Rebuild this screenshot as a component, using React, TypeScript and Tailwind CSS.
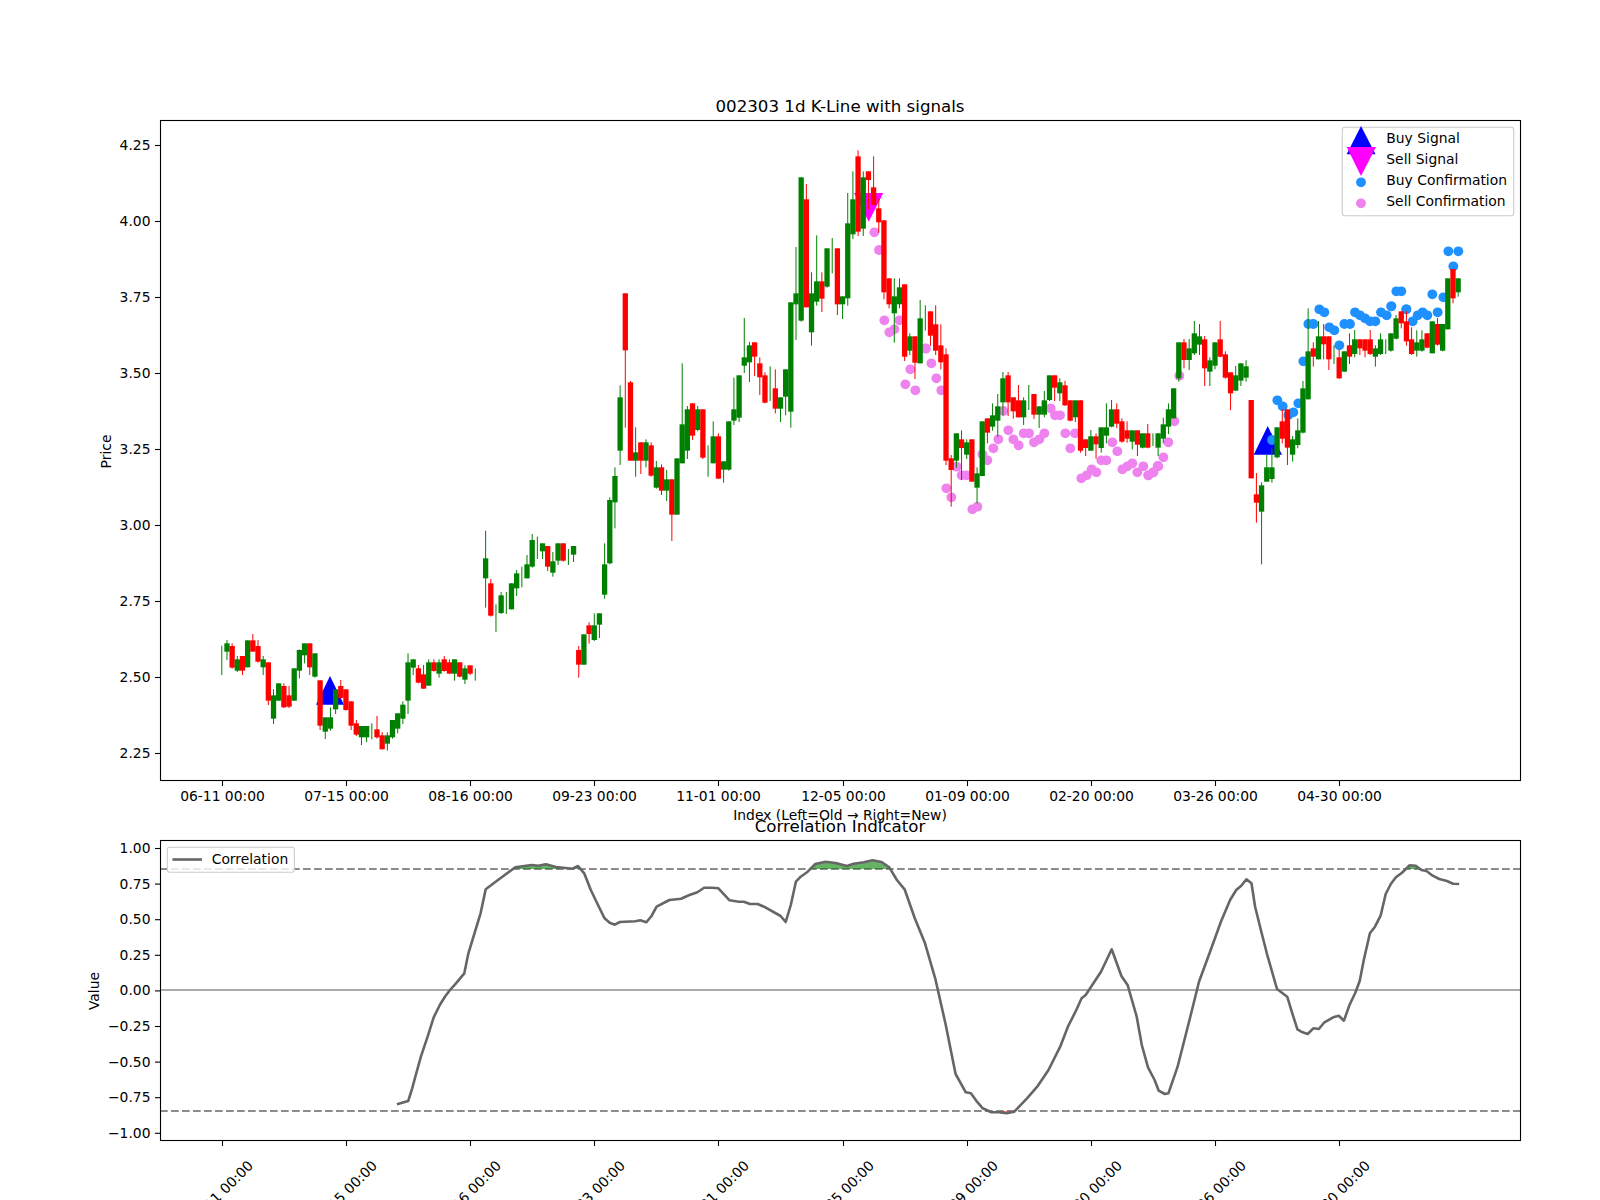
const S1 = "g437,0,0,525 g420,430,455,480 r430,438,503,506 g468,478,512,516 r468,468,512,525 g421,421,502,502 r402,421,455,455 r420,438,485,488 g468,478,502,525 r487,487,602,615 g568,586,656,672 g550,550,602,602 r550,558,622,624 r558,586,620,624 g505,505,602,602 g448,450,512,535 g430,430,466,490 r430,430,502,525 g460,460,530,533 r541,541,677,690 g652,652,695,717 g622,652,686,692 g568,568,628,642 r540,558,594,596 r568,568,630,632 r604,604,677,690 r660,670,704,708 g678,678,712,735 g678,678,712,726 g670,0,0,718 r648,688,712,716 r696,706,748,748 g697,706,731,752 g660,660,712,716 g640,640,686,700 g604,614,656,672 g460,487,602,642 g478,478,503,525 r495,505,548,550 r495,523,566,566 g478,487,557,557 r478,487,513,515 g478,487,521,533 r468,478,513,515 r478,487,521,521 g478,478,521,542 r487,487,530,532 g496,505,539,552 r496,496,521,525 g505,0,0,542 - g92,175,235,323 r237,250,347,350 g313,0,0,396 g276,286,339,342 g276,0,0,342 g250,250,328,328 g210,220,265,288 g200,0,0,262 g165,193,235,235";
const S2 = "g72,90,170,173 g80,0,0,147 g100,100,124,147 r108,108,170,183 g126,154,188,200 g100,100,152,165 r100,100,152,155 g117,0,0,165 g108,108,134,156 r408,420,464,503 g373,373,464,464 r337,346,372,401 g310,346,390,393 g310,310,344,384 g100,163,254,266";
const S3 = "g682,690,880,883 g592,618,697,775 g346,382,542,585 r70,70,241,473 r333,337,572,572 g472,547,572,620 r517,517,572,612 g508,517,572,592 r517,526,617,620 g573,592,653,656 r583,592,662,675 g600,628,662,693 r628,628,734,813 g565,565,734,734 g280,463,580,580 g408,418,542,567 r400,400,497,510 g408,418,480,484 r418,418,563,567 g526,0,0,620 g454,499,580,580 r490,499,626,626 g574,574,599,638 g454,454,599,602 g323,418,452,465 g316,316,443,456 g144,262,287,309 g216,226,277,336 r217,217,260,318 r262,280,322,375 r307,316,398,400 g289,0,0,393 r298,355,416,430 g382,382,416,456 g298,298,380,436";
const S4 = "g517,517,845,893 g351,490,523,630 g142,142,572,575 r162,208,532,532 g427,490,607,647 g316,454,515,527 r427,454,506,546 g355,355,470,473 g324,0,0,430 r355,355,523,555 g499,499,523,567 g189,280,505,527 g124,208,313,327 r61,79,305,318 g124,142,296,318 r124,124,150,238 r79,172,225,226 r207,235,277,308 r271,271,487,508 r445,445,523,535 g445,499,550,638 g445,472,523,535";
const S5 = "r-47,-47,170,183 g100,109,152,165 r109,109,188,237 g0,55,190,190 g16,0,0,92 r34,34,107,137 r16,73,152,165 r73,136,187,208 r145,163,482,495 r465,475,510,620 g400,400,482,503 r391,418,444,540 g418,427,464,477 r418,418,545,545 g502,520,563,610 g364,364,528,528 r355,355,398,430 g310,346,380,392 g282,319,362,410 g216,235,307,346 r216,226,307,348 r292,292,334,356 r255,301,352,352 g292,301,352,375 g255,0,0,330 r282,282,344,357 g319,319,344,384 g273,301,344,352 g226,226,300,303 r226,226,263,303 g235,247,280,303 r243,256,316,318 r301,301,362,364 g301,301,352,366 r301,301,452,458 r418,418,444,468 g390,409,452,452 r400,409,433,476 g382,382,444,458 g310,382,407,430 g300,328,380,382 r310,328,371,384 r355,364,425,428 r364,391,416,428 g391,391,425,448 r391,391,434,468 g400,400,443,445 r372,400,443,445 g400,0,0,438 g400,400,443,468";
const S6 = "g353,373,416,430 g310,328,380,402 g265,265,355,355 g127,127,235,245 r117,127,180,205 g117,145,180,210 g63,100,160,165 g72,109,134,165 r108,118,205,258 g172,181,215,258 g127,127,197,208 r63,118,170,172 r154,163,233,236 r217,217,280,330 g198,226,272,272 g190,190,242,258 g181,199,233,245 r300,300,535,535 r519,583,608,668 g547,556,635,793 g464,502,545,545 g445,502,537,548 g382,382,472,475 r328,364,416,430 r328,328,443,495 g408,418,464,485 g355,391,435,445 g243,265,398,400 g25,154,298,298 r127,145,170,200 g63,109,178,178 r72,109,133,178 r109,109,178,210 g136,0,0,192 r150,172,235,237 g154,154,215,215 r100,136,170,192 g90,118,162,172 r118,118,145,165 r118,118,152,172 r90,118,162,165 g136,145,170,200 g100,118,162,165 g118,0,0,162 g100,100,152,155 g45,55,116,118 r34,34,70,85 r34,64,124,137 r82,118,162,165 g91,127,152,170 g91,118,152,155 r100,100,143,145 g64,64,160,160 r54,72,134,137 g72,72,152,154 g-65,-65,88,88 r-93,-93,-5,10 g-65,-65,-23,-10";

type Candle = { i: number; c: string; wt: number; bt: number; bb: number; wb: number; doji: boolean };

function parseCandles(): Candle[] {
  const out: Candle[] = [];
  let i = 0;
  const segs: [string, number][] = [[S1, 500], [S2, 510], [S3, 270], [S4, 130], [S5, 300], [S6, 300]];
  for (const [s, oy] of segs) {
    for (const tok of s.split(" ")) {
      if (tok !== "-") {
        const c = tok[0] === "g" ? "#008000" : "#ff0000";
        const [a, b, d, e] = tok.slice(1).split(",").map(Number);
        out.push({ i, c, wt: oy + a / 3, bt: oy + b / 3, bb: oy + d / 3, wb: oy + e / 3, doji: b === 0 && d === 0 });
      }
      i++;
    }
  }
  return out;
}
const candles = parseCandles();
const bx = (i: number) => 221.8 + 5.173 * i;

function pts(s: string, ox: number, oy: number, sx: number): number[][] {
  return s.split(" ").map((p) => {
    const [a, b] = p.split(",").map(Number);
    return [ox + a / sx, oy + b / 3];
  });
}

const violet = [
  ...pts("523,307 537,360", 700, 130, 3),
  ...pts("677,656", 700, 130, 3),
  ...pts("73,61 88,97 103,88 118,61 197,145 151,208 136,253 166,271 214,190 229,235 244,271 259,565 274,592 290,500 305,526 320,526 367,463 382,481 337,628 352,620 400,445 415,418 430,333 445,391 460,418 476,436 491,400 507,400 522,427 538,418 553,400 572,325 585,346 600,346 616,400 645,400 631,445 664,535 680,526 695,508 709,517 724,481 739,481 757,427 772,454 787,508 802,499 817,490 832,517 850,499 865,526 880,517 893,498", 860, 300, 3),
  ...pts("25,526 40,517 55,499 70,472 85,427 103,364 118,227", 1140, 300, 3),
];
const blue = [
  ...pts("396,420 412,301 428,319 445,345 460,337 475,310 490,184 505,72 520,72 538,28 553,37 568,82 583,91 598,136 613,72 630,72 645,37 660,46 675,55 690,64 706,64 723,37 740,46 754,19 799,28 818,64 833,46 848,37 862,46 893,37", 1140, 300, 3),
  ...pts("235,49 265,49 250,94 79,169 94,169 187,178 220,187 64,214 109,223", 1370, 235, 3),
];

const line = [
  ...pts("778,1003 800,993 808,955 815,915 825,860 838,800 850,742 862,705 872,680 882,660 892,643 910,610 918,550 932,480 942,430 952,358 978,328 1010,292 1042,285 1055,287 1070,283 1090,291 1122,296 1133,288 1145,310 1158,360 1172,405 1185,445 1195,458 1205,464 1215,456 1245,454 1255,451 1267,457 1277,438 1287,410 1312,390 1335,386 1350,376 1367,367 1380,353 1395,353 1408,355 1430,391 1448,395 1458,395 1470,402 1485,402 1500,412 1530,438 1540,456 1550,405 1560,335", 0, 770, 1.96),
  ...pts("0,322 15,305 30,282 50,275 70,279 92,288 105,281 125,277 142,271 160,276 175,292 190,330 205,358 225,445 245,520 265,625 285,760 305,912 325,967 335,970 347,995 358,1015 375,1027 390,1027 405,1030 420,1025 445,985 465,950 487,900 510,830 525,770 540,725 552,685 560,675 575,640 590,605 611,538 630,618 642,645 660,740 670,825 682,892 695,930 703,962 715,972 722,970 740,890 765,740 782,635 805,540 825,455 843,390 855,360 865,347 875,328 885,340 892,410 905,490 915,550 935,657 955,680 965,730 975,778 985,787 995,792 1006,775 1017,777 1027,758 1045,742 1056,737 1066,752 1077,705 1088,670 1097,633 1105,570 1117,490 1127,470 1138,437 1148,372 1158,342 1168,322 1180,308 1195,286 1207,287 1218,300 1228,303 1240,317 1253,327 1268,333 1280,341 1292,342", 800, 770, 1.96),
];
const linePts = line.map((p) => p[0].toFixed(1) + "," + p[1].toFixed(1)).join(" ");

const xTicks = [222.5, 346.5, 470.5, 594.5, 718.5, 843.5, 967.5, 1091.5, 1215.5, 1339.5];
const xLabels = ["06-11 00:00", "07-15 00:00", "08-16 00:00", "09-23 00:00", "11-01 00:00", "12-05 00:00", "01-09 00:00", "02-20 00:00", "03-26 00:00", "04-30 00:00"];
const priceTicks = ["4.25", "4.00", "3.75", "3.50", "3.25", "3.00", "2.75", "2.50", "2.25"];
const valueTicks = ["1.00", "0.75", "0.50", "0.25", "0.00", "−0.25", "−0.50", "−0.75", "−1.00"];
const dash = "7.7 3.3";

export default function App() {
  return (
    <div className="w-[1600px] h-[1200px] bg-white">
      <svg width={1600} height={1200} viewBox="0 0 1600 1200" className="block font-['DejaVu_Sans',sans-serif] text-[13.89px]">
        <defs>
          <clipPath id="above"><rect x={160} y={840} width={1360} height={29} /></clipPath>
          <clipPath id="below"><rect x={160} y={1111} width={1360} height={29} /></clipPath>
        </defs>

        {/* price panel */}
        <text x={840} y={112} textAnchor="middle" fontSize={16.67}>002303 1d K-Line with signals</text>
        <polygon points="330,676 316,704.7 344,704.7" fill="#0000ff" />
        <polygon points="1267.7,426 1253.7,454.7 1282,454.7" fill="#0000ff" />
        <polygon points="854,193 883.3,193 868.7,221.7" fill="#ff00ff" />
        {violet.map((p, k) => <circle key={k} cx={p[0]} cy={p[1]} r={4.9} fill="#ee82ee" />)}
        {blue.map((p, k) => <circle key={k} cx={p[0]} cy={p[1]} r={4.9} fill="#1e90ff" />)}
        {candles.map((k) => (
          <g key={k.i} fill={k.c} stroke="none">
            <rect x={bx(k.i) - 0.5} y={k.wt} width={1} height={k.wb - k.wt} />
            {!k.doji && <rect x={bx(k.i) - 2.65} y={k.bt} width={5.3} height={k.bb - k.bt} />}
          </g>
        ))}
        <rect x={160.5} y={120.5} width={1360} height={660} fill="none" stroke="#000" strokeWidth={1.1} />
        {xTicks.map((x, k) => (
          <g key={k}>
            <line x1={x} x2={x} y1={781} y2={786} stroke="#000" strokeWidth={1.1} />
            <text x={x} y={801} textAnchor="middle">{xLabels[k]}</text>
          </g>
        ))}
        {priceTicks.map((t, k) => (
          <g key={t}>
            <line x1={155} x2={160} y1={145.5 + 76 * k} y2={145.5 + 76 * k} stroke="#000" strokeWidth={1.1} />
            <text x={150.5} y={150 + 76 * k} textAnchor="end">{t}</text>
          </g>
        ))}
        <text transform="translate(111,451.5) rotate(-90)" textAnchor="middle">Price</text>
        <text x={840} y={820} textAnchor="middle">Index (Left=Old → Right=New)</text>

        {/* price legend */}
        <rect x={1342.3} y={127.3} width={171.4} height={88.4} rx={2.5} fill="#fff" fillOpacity={0.8} stroke="#ccc" strokeWidth={1.1} />
        <polygon points="1361,126 1346.7,154.3 1375.5,154.3" fill="#0000ff" />
        <polygon points="1346.7,147 1376,147 1361,176" fill="#ff00ff" />
        <circle cx={1361} cy={182.3} r={4.9} fill="#1e90ff" />
        <circle cx={1361} cy={203.3} r={4.9} fill="#ee82ee" />
        <text x={1386.3} y={143.3}>Buy Signal</text>
        <text x={1386.3} y={164.3}>Sell Signal</text>
        <text x={1386.3} y={185.3}>Buy Confirmation</text>
        <text x={1386.3} y={206.3}>Sell Confirmation</text>

        {/* correlation panel */}
        <text x={840} y={831.5} textAnchor="middle" fontSize={16.67}>Correlation Indicator</text>
        <line x1={160} x2={1520} y1={990} y2={990} stroke="#aaaaaa" strokeWidth={2} />
        <line x1={160} x2={1520} y1={869} y2={869} stroke="#8c8c8c" strokeWidth={2} strokeDasharray={dash} />
        <line x1={160} x2={1520} y1={1111} y2={1111} stroke="#8c8c8c" strokeWidth={2} strokeDasharray={dash} />
        <polygon points={linePts + " 1459,869 397,869"} fill="#008000" fillOpacity={0.6} clipPath="url(#above)" />
        <polygon points={linePts + " 1459,1111 397,1111"} fill="#ff0000" fillOpacity={0.5} clipPath="url(#below)" />
        <polyline points={linePts} fill="none" stroke="#666666" strokeWidth={2.6} strokeLinejoin="round" />
        <rect x={160.5} y={840.5} width={1360} height={300} fill="none" stroke="#000" strokeWidth={1.1} />
        {xTicks.map((x, k) => (
          <g key={k}>
            <line x1={x} x2={x} y1={1141} y2={1146} stroke="#000" strokeWidth={1.1} />
            <text transform={`translate(${x - 2},1193) rotate(-45)`} textAnchor="middle" dominantBaseline="central">{xLabels[k]}</text>
          </g>
        ))}
        {valueTicks.map((t, k) => (
          <g key={t}>
            <line x1={155} x2={160} y1={848.5 + 35.6 * k} y2={848.5 + 35.6 * k} stroke="#000" strokeWidth={1.1} />
            <text x={150.5} y={853 + 35.6 * k} textAnchor="end">{t}</text>
          </g>
        ))}
        <text transform="translate(99,991) rotate(-90)" textAnchor="middle">Value</text>

        {/* correlation legend */}
        <rect x={167.3} y={847.3} width={127.1} height={25} rx={2.5} fill="#fff" fillOpacity={0.8} stroke="#ccc" strokeWidth={1.1} />
        <line x1={172.4} x2={202} y1={859.5} y2={859.5} stroke="#666666" strokeWidth={2.6} />
        <text x={211.7} y={864.3}>Correlation</text>
      </svg>
    </div>
  );
}
